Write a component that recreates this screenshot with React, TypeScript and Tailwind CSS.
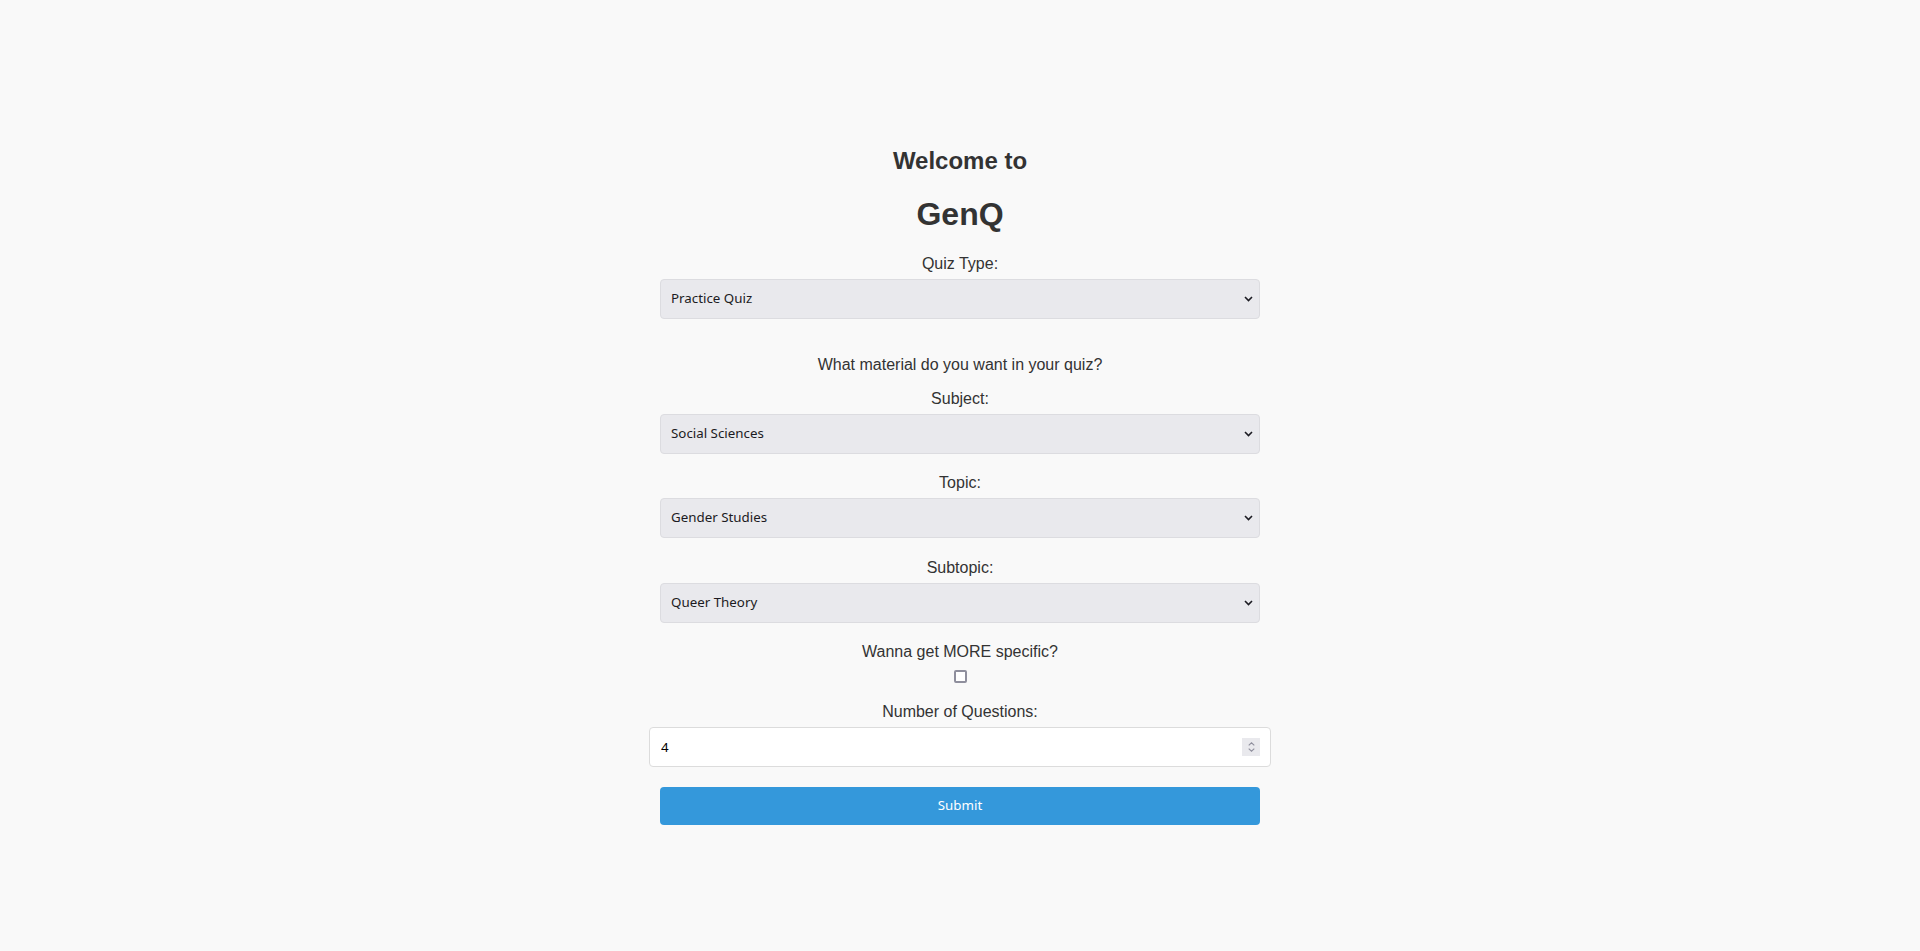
import React, { useState } from 'react';

const labelCls = "block text-[16px] leading-[18px] text-[#333] mb-[6px]";

const Chevron: React.FC = () => (
  <svg
    className="pointer-events-none absolute right-[7px] top-1/2 -translate-y-1/2"
    width="9"
    height="6"
    viewBox="0 0 9 6"
    fill="none"
  >
    <path d="M1 1l3.5 3.5L8 1" stroke="#1c1b22" strokeWidth="1.6" />
  </svg>
);

type SelectProps = {
  value: string;
  options: string[];
  onChange: (v: string) => void;
};

const Select: React.FC<SelectProps> = ({ value, options, onChange }) => (
  <div className="relative w-full">
    <select
      value={value}
      onChange={(e) => onChange(e.target.value)}
      className="block w-full h-[40px] appearance-none rounded-[4px] border border-[#dcdce0] bg-[#e9e9ed] px-[10px] text-left text-[13.33px] text-[#1c1b22] font-['Noto_Sans',sans-serif] outline-none"
    >
      {options.map((o) => (
        <option key={o} value={o}>
          {o}
        </option>
      ))}
    </select>
    <Chevron />
  </div>
);

export default function App() {
  const [quizType, setQuizType] = useState('Practice Quiz');
  const [subject, setSubject] = useState('Social Sciences');
  const [topic, setTopic] = useState('Gender Studies');
  const [subtopic, setSubtopic] = useState('Queer Theory');
  const [specific, setSpecific] = useState(false);
  const [count, setCount] = useState(4);

  return (
    <div className="min-h-screen bg-[#f9f9f9] font-['Liberation_Sans',Arial,sans-serif] text-[#333]">
      <div className="mx-auto w-[600px] pt-[147px] text-center">
        <h2 className="text-[24px] leading-[28px] font-bold text-[#333]">Welcome to</h2>
        <h1 className="mt-[21px] mb-[22px] text-[32px] leading-[37px] font-bold text-[#333]">GenQ</h1>

        <form onSubmit={(e) => e.preventDefault()}>
          {/* Quiz type */}
          <div>
            <label className={labelCls}>Quiz Type:</label>
            <Select
              value={quizType}
              onChange={setQuizType}
              options={['Practice Quiz', 'Timed Quiz', 'Flashcards']}
            />
          </div>

          <p className="mt-[37px] mb-[16px] text-[16px] leading-[18px] text-[#333]">
            What material do you want in your quiz?
          </p>

          <div>
            <label className={labelCls}>Subject:</label>
            <Select
              value={subject}
              onChange={setSubject}
              options={['Social Sciences', 'Natural Sciences', 'Humanities']}
            />
          </div>

          <div className="mt-[20px]">
            <label className={labelCls}>Topic:</label>
            <Select
              value={topic}
              onChange={setTopic}
              options={['Gender Studies', 'Sociology', 'Psychology']}
            />
          </div>

          <div className="mt-[21px]">
            <label className={labelCls}>Subtopic:</label>
            <Select
              value={subtopic}
              onChange={setSubtopic}
              options={['Queer Theory', 'Feminist Theory', 'Masculinity Studies']}
            />
          </div>

          <div className="mt-[20px]">
            <label className="block text-[16px] leading-[18px] text-[#333]">Wanna get MORE specific?</label>
            <input
              type="checkbox"
              checked={specific}
              onChange={(e) => setSpecific(e.target.checked)}
              className="mx-auto mt-[9px] block h-[13px] w-[13px] appearance-none rounded-[2px] border-2 border-[#8f8f9d] bg-white checked:bg-[#0060df] checked:border-[#0060df]"
            />
          </div>

          <div className="mt-[20px]">
            <label className={labelCls}>Number of Questions:</label>
            <div className="relative -mx-[11px]">
              <input
                type="number"
                value={count}
                onChange={(e) => setCount(Number(e.target.value))}
                className="block h-[40px] w-full rounded-[4px] border border-[#dcdcdc] bg-white px-[11px] text-left text-[13.33px] text-black font-['Noto_Sans',sans-serif] outline-none [appearance:textfield] [&::-webkit-inner-spin-button]:appearance-none [&::-webkit-outer-spin-button]:appearance-none"
              />
              <div className="pointer-events-none absolute right-[11px] top-1/2 flex h-[18px] w-[18px] -translate-y-1/2 flex-col items-center justify-center gap-[2px] bg-[#e9e9ed]">
                <svg width="7" height="4" viewBox="0 0 7 4" fill="none">
                  <path d="M0.7 3.4L3.5 0.8l2.8 2.6" stroke="#8f8f9d" strokeWidth="1.1" />
                </svg>
                <svg width="7" height="4" viewBox="0 0 7 4" fill="none">
                  <path d="M0.7 0.6L3.5 3.2l2.8-2.6" stroke="#8f8f9d" strokeWidth="1.1" />
                </svg>
              </div>
            </div>
          </div>

          <button
            type="submit"
            className="mt-[20px] block h-[38px] w-full rounded-[4px] bg-[#3498db] text-[13.33px] text-white font-['Noto_Sans',sans-serif]"
          >
            Submit
          </button>
        </form>
      </div>
    </div>
  );
}
